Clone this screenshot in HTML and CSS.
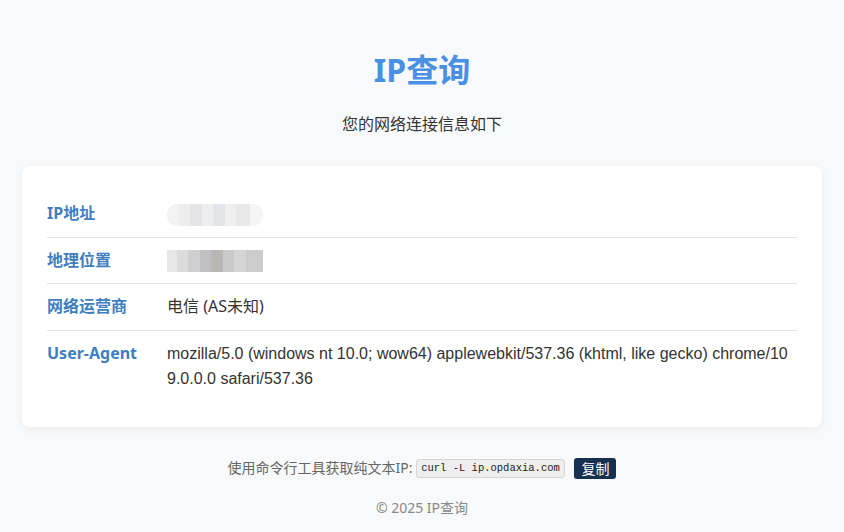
FILE: index.html
```html
<!DOCTYPE html>
<html lang="zh-CN">
<head>
<meta charset="utf-8">
<title>IP查询</title>
<link rel="stylesheet" href="styles.css">
</head>
<body>
<div class="page">
  <header class="header">
    <h1 class="title">IP查询</h1>
    <p class="subtitle">您的网络连接信息如下</p>
  </header>
  <main class="card">
    <div class="row">
      <div class="label">IP地址</div>
      <div class="value"><span class="blur blur-ip" aria-label="已隐藏"></span></div>
    </div>
    <div class="row">
      <div class="label">地理位置</div>
      <div class="value"><span class="blur blur-geo" aria-label="已隐藏"></span></div>
    </div>
    <div class="row">
      <div class="label">网络运营商</div>
      <div class="value">电信 (AS未知)</div>
    </div>
    <div class="row last">
      <div class="label">User-Agent</div>
      <div class="value ua">mozilla/5.0 (windows nt 10.0; wow64) applewebkit/537.36 (khtml, like gecko) chrome/109.0.0.0 safari/537.36</div>
    </div>
  </main>
  <footer class="footer">
    <p class="cli">使用命令行工具获取纯文本IP: <code class="cmd">curl -L ip.opdaxia.com</code> <button class="copy">复制</button></p>
    <p class="copyright">© 2025 IP查询</p>
  </footer>
</div>
</body>
</html>
```
FILE: styles.css
```css
* { box-sizing: border-box; }
html, body { margin: 0; padding: 0; }
body {
  background: #f8f9fb;
  font-family: "Noto Sans", "Noto Sans CJK SC", sans-serif;
  color: #333;
}
.page {
  max-width: 842px;
  margin: 0 auto;
  padding: 50px 21px 0;
}
.header { text-align: center; }
.title {
  margin: 0;
  font-size: 32px;
  line-height: 40px;
  font-weight: 700;
  color: #4a90e2;
}
.subtitle {
  margin: 22px 0 0;
  font-size: 16px;
  line-height: 24px;
  color: #333;
}
.card {
  margin-top: 30px;
  background: #fff;
  border-radius: 8px;
  box-shadow: 0 2px 10px rgba(0, 0, 0, 0.06);
  padding: 25px 25px;
}
.row {
  display: flex;
  padding: 10px 0;
  border-bottom: 1px solid #e3e3e3;
  font-size: 16px;
  line-height: 25.5px;
}
.row.last { border-bottom: none; }
.label {
  flex: 0 0 120px;
  font-weight: 700;
  color: #3f7fc1;
}
.value {
  flex: 1;
  color: #333;
}
.ua {
  word-break: break-all;
  font-family: "Liberation Sans", "Noto Sans CJK SC", sans-serif;
}
.blur {
  display: inline-block;
  height: 22px;
  vertical-align: middle;
  border-radius: 10px;
}
.blur-ip {
  width: 96px;
  background: linear-gradient(90deg, #f2f2f2 0 12%, #ebebeb 12% 24%, #e2e2e5 24% 36%, #ececee 36% 48%, #dfe2e6 48% 60%, #eeeeef 60% 72%, #e6e6e6 72% 86%, #f4f4f4 86% 100%);
  opacity: 0.9;
}
.blur-geo {
  width: 96px;
  border-radius: 0;
  background: linear-gradient(90deg, #e8e8e8 0 10%, #dcdcdc 10% 22%, #cfcfd1 22% 34%, #c0c0c2 34% 46%, #b9b6b3 46% 58%, #cacacb 58% 70%, #d5d5d7 70% 82%, #cccccc 82% 100%);
}
.footer {
  text-align: center;
  margin-top: 29px;
}
.cli {
  margin: 0;
  font-size: 14px;
  line-height: 24px;
  color: #666;
}
.cmd {
  display: inline-block;
  font-family: "Liberation Mono", "DejaVu Sans Mono", monospace;
  font-size: 10.5px;
  line-height: 17px;
  padding: 0 4px;
  background: #eeeeee;
  border: 1px solid #d6d6d6;
  border-radius: 3px;
  color: #222;
  vertical-align: middle;
}
.copy {
  margin-left: 6px;
  font-family: "Noto Sans CJK SC", sans-serif;
  font-size: 14px;
  line-height: 19px;
  padding: 1px 7px;
  background: #16304f;
  color: #fff;
  border: none;
  border-radius: 3px;
  vertical-align: middle;
}
.copyright {
  margin: 16px 0 0;
  font-size: 14px;
  line-height: 24px;
  color: #888;
}
```
